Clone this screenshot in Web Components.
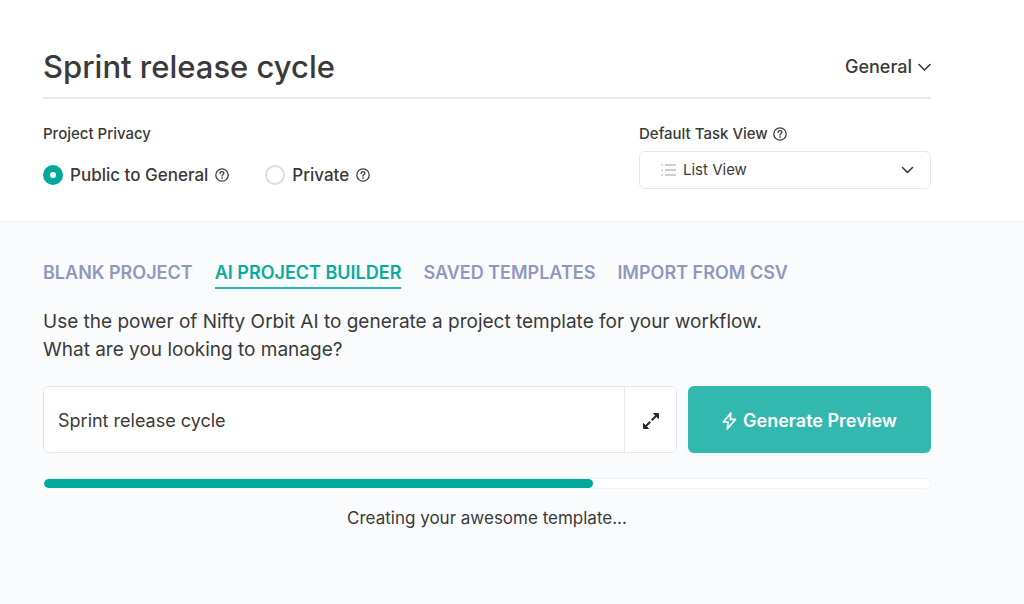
<!DOCTYPE html>
<html lang="en">
<head>
<meta charset="utf-8">
<meta name="viewport" content="width=device-width, initial-scale=1">
<title>New project</title>
<style>
  html { background: #fafbfd; }
  body { margin: 0; font-family: Inter, "Liberation Sans", sans-serif; color: #3a3a3a; }
</style>
</head>
<body>
<project-setup></project-setup>

<template id="project-setup">
  <style>
    :host { display: block; }
    header { background: #fff; border-bottom: 1px solid #eeeff1; padding: 44px 93px 32px 43px; }
    .settings { display: flex; justify-content: space-between; padding-top: 24px; }
    main { padding: 39px 93px 40px 43px; }
    p { margin: 19px 0 22px; font-size: 19px; line-height: 28px; }
    .status { margin: 17px 0 0; font-size: 17px; line-height: 24px; text-align: center; }
    @media (max-width: 800px) {
      header, main { padding-left: 24px; padding-right: 24px; }
      .settings { flex-wrap: wrap; gap: 24px; }
    }
  </style>
  <header>
    <project-title name="Sprint release cycle" folder="General"></project-title>
    <div class="settings">
      <privacy-options></privacy-options>
      <task-view-select></task-view-select>
    </div>
  </header>
  <main>
    <builder-tabs></builder-tabs>
    <p>Use the power of Nifty Orbit AI to generate a project template for your workflow.<br>What are you looking to manage?</p>
    <prompt-bar value="Sprint release cycle">Generate Preview</prompt-bar>
    <progress-line value="62"></progress-line>
    <div class="status" role="status">Creating your awesome template...</div>
  </main>
</template>

<template id="project-title">
  <style>
    :host { display: flex; align-items: center; gap: 16px; border-bottom: 2px solid #e9e9ea; padding-bottom: 7px; }
    input { flex: 1; min-width: 0; height: 46px; padding: 0; border: 0; outline: 0; background: none; font: 500 31px/46px Inter, sans-serif; color: inherit; }
    .folder { display: grid; align-items: center; }
    select { grid-area: 1 / 1; appearance: none; border: 0; padding: 0 18px 0 0; background: none; font: 500 18px/24px Inter, sans-serif; color: inherit; }
    svg { grid-area: 1 / 1; justify-self: end; pointer-events: none; }
  </style>
  <input type="text" aria-label="Project name">
  <div class="folder">
    <select aria-label="Folder"><option></option></select>
    <svg width="13" height="9" viewBox="0 0 13 9" fill="none" stroke="#3a3a3a" stroke-width="1.6" stroke-linecap="round" stroke-linejoin="round"><path d="M1 1.500 6.500 7 12 1.500"/></svg>
  </div>
</template>

<template id="help-icon">
  <style>:host { display: block; flex: none; width: 14px; height: 14px; } svg { display: block; }</style>
  <svg width="14" height="14" viewBox="0 0 14 14" fill="none" stroke="#3a3a3a" stroke-width="1.3" stroke-linecap="round" role="img" aria-label="Help"><circle cx="7" cy="7" r="6.2"/><path d="M5.1 5.5C5.1 4.3 5.9 3.6 7 3.6s1.9.7 1.9 1.7C8.900 6.500 7 6.500 7 8"/><circle cx="7" cy="10" r=".45" fill="#3a3a3a" stroke-width=".6"/></svg>
</template>

<template id="privacy-options">
  <style>
    :host { display: block; }
    fieldset { margin: 0; padding: 0; border: 0; }
    legend { padding: 0; font: 500 15px/22px Inter, sans-serif; }
    .row { display: flex; flex-wrap: wrap; gap: 36px; padding-top: 18px; }
    .choice { display: flex; align-items: center; gap: 7px; }
    label { display: flex; align-items: center; gap: 7px; font: 500 17px/24px Inter, sans-serif; }
    input { appearance: none; margin: 0; width: 20px; height: 20px; border: 2px solid #dcdcdc; border-radius: 50%; background: #fff; box-sizing: border-box; }
    input:checked { border: 7px solid #00a99a; }
  </style>
  <fieldset>
    <legend>Project Privacy</legend>
    <div class="row">
      <div class="choice"><label><input type="radio" name="privacy" checked>Public to General</label><help-icon></help-icon></div>
      <div class="choice"><label><input type="radio" name="privacy">Private</label><help-icon></help-icon></div>
    </div>
  </fieldset>
</template>

<template id="task-view-select">
  <style>
    :host { display: block; width: 292px; }
    .head { display: flex; align-items: center; gap: 5px; }
    label { font: 500 15px/22px Inter, sans-serif; }
    .box { display: grid; align-items: center; margin-top: 6px; }
    select { grid-area: 1 / 1; appearance: none; width: 100%; height: 38px; padding: 0 40px 0 43px; border: 1px solid #e6e7e9; border-radius: 6px; background: #fff; font: 400 15px/24px Inter, sans-serif; color: inherit; }
    svg { grid-area: 1 / 1; pointer-events: none; }
    .list { margin-left: 22px; }
    .arrow { justify-self: end; margin-right: 17px; }
  </style>
  <div class="head"><label for="view">Default Task View</label><help-icon></help-icon></div>
  <div class="box">
    <select id="view"><option>List View</option></select>
    <svg class="list" width="16" height="12" viewBox="0 0 16 12" stroke="#9b9b9b" stroke-width="1.2"><path d="M4 1h11M4 6h11M4 11h11M.5 1H2M.5 6H2M.5 11H2"/></svg>
    <svg class="arrow" width="13" height="9" viewBox="0 0 13 9" fill="none" stroke="#3a3a3a" stroke-width="1.6" stroke-linecap="round" stroke-linejoin="round"><path d="M1.500 1.500 6.500 6.500 11.500 1.500"/></svg>
  </div>
</template>

<template id="builder-tabs">
  <style>
    :host { display: block; }
    .tabs { display: flex; flex-wrap: wrap; gap: 22px; }
    button { margin: 0; padding: 0 0 2px; border: 0; border-bottom: 2px solid transparent; background: none; font: 600 18px/24px Inter, sans-serif; color: #9297c0; }
    button[aria-selected="true"] { color: #08ac9d; border-color: #2db8ad; }
  </style>
  <div class="tabs" role="tablist">
    <button role="tab" aria-selected="false">BLANK PROJECT</button>
    <button role="tab" aria-selected="true">AI PROJECT BUILDER</button>
    <button role="tab" aria-selected="false">SAVED TEMPLATES</button>
    <button role="tab" aria-selected="false">IMPORT FROM CSV</button>
  </div>
</template>

<template id="prompt-bar">
  <style>
    :host { display: flex; gap: 11px; height: 67px; }
    .field { flex: 1; min-width: 0; display: flex; box-sizing: border-box; border: 1px solid #e5e6e8; border-radius: 6px; background: #fff; overflow: hidden; }
    input { flex: 1; min-width: 0; padding: 2px 14px 0; border: 0; outline: 0; background: none; font: 400 18px/24px Inter, sans-serif; color: inherit; }
    button { display: flex; align-items: center; justify-content: center; padding: 0; border: 0; }
    .expand { width: 52px; border-left: 1px solid #e9eaec; background: #fff; padding-top: 2px; }
    .go { width: 243px; gap: 6px; padding-top: 2px; border-radius: 6px; background: #33b8af; color: #fff; font: 600 18px/24px Inter, sans-serif; box-shadow: 0 2px 4px #0000000d; }
  </style>
  <div class="field">
    <input type="text" aria-label="What are you looking to manage?">
    <button class="expand" aria-label="Expand"><svg width="16" height="16" viewBox="0 0 16 16" fill="#2b2b2b" stroke="#2b2b2b"><path d="M10.500.500h5v5zM.500 10.500v5h5z" stroke-linejoin="round"/><path d="m13 3-4.300 4.300M7.300 8.700 3 13" fill="none" stroke-width="2"/></svg></button>
  </div>
  <button class="go"><svg width="15" height="18" viewBox="0 0 15 18" fill="none" stroke="#fff" stroke-width="1.700" stroke-linejoin="round"><path d="M8.800 1 1.300 10h4.900L5.200 17l8.300-9.600H8.200z"/></svg><span><slot></slot></span></button>
</template>

<template id="progress-line">
  <style>
    :host { display: block; padding-top: 25px; }
    progress { display: block; appearance: none; width: 100%; height: 11px; box-sizing: border-box; border: 1px solid #f0f1f4; border-radius: 6px; background: #fff; overflow: hidden; }
    progress::-webkit-progress-bar { background: #fff; border-radius: 5px; }
    progress::-webkit-progress-value { background: #00a99a; border-radius: 5px; }
  </style>
  <progress max="100" aria-label="Template generation"></progress>
</template>

<script>
  class Base extends HTMLElement {
    constructor() {
      super();
      this.attachShadow({ mode: "open" })
        .append(document.getElementById(this.localName).content.cloneNode(true));
    }
    $(selector) { return this.shadowRoot.querySelector(selector); }
  }
  class HelpIcon extends Base {}
  class PrivacyOptions extends Base {}
  class TaskViewSelect extends Base {}
  class ProjectSetup extends Base {}
  class ProjectTitle extends Base {
    connectedCallback() {
      this.$("input").value = this.getAttribute("name");
      this.$("option").textContent = this.getAttribute("folder");
    }
  }
  class BuilderTabs extends Base {
    connectedCallback() {
      const tabs = this.shadowRoot.querySelectorAll("button");
      tabs.forEach(tab => tab.addEventListener("click", () =>
        tabs.forEach(t => t.setAttribute("aria-selected", t === tab))));
    }
  }
  class PromptBar extends Base {
    connectedCallback() { this.$("input").value = this.getAttribute("value"); }
  }
  class ProgressLine extends Base {
    connectedCallback() { this.$("progress").value = Number(this.getAttribute("value")); }
  }
  customElements.define("help-icon", HelpIcon);
  customElements.define("privacy-options", PrivacyOptions);
  customElements.define("task-view-select", TaskViewSelect);
  customElements.define("project-title", ProjectTitle);
  customElements.define("builder-tabs", BuilderTabs);
  customElements.define("prompt-bar", PromptBar);
  customElements.define("progress-line", ProgressLine);
  customElements.define("project-setup", ProjectSetup);
</script>
</body>
</html>
